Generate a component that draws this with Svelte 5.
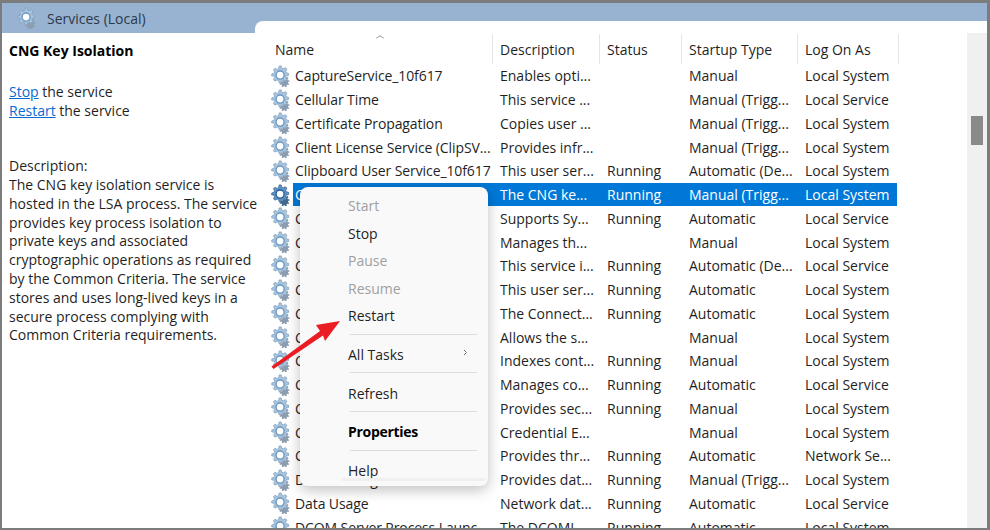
<script>
  const columns = ["Name", "Description", "Status", "Startup Type", "Log On As"];

  const rows = [
    ["CaptureService_10f617", "Enables opti...", "", "Manual", "Local System"],
    ["Cellular Time", "This service ...", "", "Manual (Trigg...", "Local Service"],
    ["Certificate Propagation", "Copies user ...", "", "Manual (Trigg...", "Local System"],
    ["Client License Service (ClipSV...", "Provides infr...", "", "Manual (Trigg...", "Local System"],
    ["Clipboard User Service_10f617", "This user ser...", "Running", "Automatic (De...", "Local System"],
    ["CNG Key Isolation", "The CNG ke...", "Running", "Manual (Trigg...", "Local System"],
    ["COM+ Event System", "Supports Sy...", "Running", "Automatic", "Local Service"],
    ["COM+ System Application", "Manages th...", "", "Manual", "Local System"],
    ["Connected Devices Platform", "This service i...", "Running", "Automatic (De...", "Local Service"],
    ["Connected Devices User", "This user ser...", "Running", "Automatic", "Local System"],
    ["Connected User Experiences", "The Connect...", "Running", "Automatic", "Local System"],
    ["ConsentUX", "Allows the s...", "", "Manual", "Local System"],
    ["Contact Data", "Indexes cont...", "Running", "Manual", "Local System"],
    ["CoreMessaging", "Manages co...", "Running", "Automatic", "Local Service"],
    ["Credential Manager", "Provides sec...", "Running", "Manual", "Local System"],
    ["Credential Enrollment", "Credential E...", "", "Manual", "Local System"],
    ["Cryptographic Services", "Provides thr...", "Running", "Automatic", "Network Se..."],
    ["Data Sharing", "Provides dat...", "Running", "Manual (Trigg...", "Local System"],
    ["Data Usage", "Network dat...", "Running", "Automatic", "Local Service"],
    ["DCOM Server Process Launc...", "The DCOMI...", "Running", "Automatic", "Local System"]
  ];

  const menu = [
    [{ label: "Start", off: true }, { label: "Stop" }, { label: "Pause", off: true }, { label: "Resume", off: true }, { label: "Restart" }],
    [{ label: "All Tasks", more: true }],
    [{ label: "Refresh" }],
    [{ label: "Properties", bold: true }],
    [{ label: "Help" }]
  ];
</script>

{#snippet gear(selected)}
  <svg class="gear" width="22" height="22" viewBox="0 0 24 24">
    <path d="M18 13.500l1.500-.3.600 1.400-1.200 1 .5 1 1.600-.1.300 1.500-1.600.6-.1 1.100 1.300.9-.7 1.300-1.500-.4-.7.8.4 1.500-1.300.6-1-1.300h-1.100l-1 1.300-1.300-.7.500-1.500-.7-.8-1.600.4-.5-1.300 1.300-1z" fill={selected ? "#44688c" : "#8d9db0"} />
    <path d="M10 1l2.200 0 .7 2.500 1.600.6 2.300-1.200 1.600 1.600-1.200 2.300.6 1.600 2.500.7v2.300l-2.500.7-.6 1.600 1.200 2.300-1.600 1.600-2.300-1.200-1.600.6-.7 2.500H10l-.7-2.500-1.600-.6-2.300 1.200-1.600-1.600 1.200-2.300-.6-1.600L1.900 12V9.800l2.500-.8.600-1.500-1.200-2.300 1.600-1.600 2.300 1.200 1.600-.7z" fill={selected ? "#5f93c6" : "#a9c5de"} stroke={selected ? "#35608c" : "#7f9fbe"} stroke-width=".8" />
    <circle cx="11" cy="11" r="4.400" fill="#fff" stroke={selected ? "#1f5f9e" : "#6a97c2"} stroke-width="1.500" />
  </svg>
{/snippet}

<div class="window">
  <header class="band">
    {@render gear(false)}
    <span>Services (Local)</span>
  </header>

  <div class="body">
    <aside class="detail">
      <h2>CNG Key Isolation</h2>
      <p class="actions">
        <span><a href="#stop">Stop</a> the service</span>
        <span><a href="#restart">Restart</a> the service</span>
      </p>
      <p class="about">
        Description:<br />
        The CNG key isolation service is hosted in the LSA process. The service provides key process isolation to private keys and associated cryptographic operations as required by the Common Criteria. The service stores and uses long-lived keys in a secure process complying with Common Criteria requirements.
      </p>
    </aside>

    <section class="list">
      <div class="table">
        <div class="row head">
          {#each columns as col, i}
            <div class="cell">{col}{#if i === 0}<span class="caret"></span>{/if}</div>
          {/each}
        </div>
        {#each rows as row, r}
          <div class="line">
            {@render gear(r === 5)}
            <div class="row" class:selected={r === 5}>
              {#each row as text}
                <div class="cell">{text}</div>
              {/each}
            </div>
          </div>
        {/each}
      </div>
      <div class="scrollbar"><div class="thumb"></div></div>
    </section>
  </div>

  <div class="menu">
    {#each menu as group, g}
      {#if g > 0}<div class="sep"></div>{/if}
      <div class="group">
        {#each group as item}
          <div class="item" class:off={item.off} class:bold={item.bold}>
            {item.label}
            {#if item.more}
              <svg class="more" width="5" height="7" viewBox="0 0 5 7"><path d="M1 1l2.500 2.500L1 6" fill="none" stroke="#777" stroke-width="1" /></svg>
            {/if}
          </div>
        {/each}
      </div>
    {/each}
  </div>

  <svg class="arrow" width="74" height="54" viewBox="0 0 74 54">
    <path d="M70 3L46 7l4 6L1.500 48.500 3.500 51 53 17.500l2 5.500z" fill="#ea1c24" />
  </svg>
</div>

<style>
  :global(body) {
    overflow: hidden;
    background: #fff;
  }

  .window {
    position: relative;
    box-sizing: border-box;
    width: 990px;
    height: 530px;
    overflow: hidden;
    border: solid #7c7c7c;
    border-width: 3px 3px 2px 2px;
    font-family: "Open Sans", "Noto Sans", sans-serif;
    font-size: 14px;
    color: #1f1f1f;
    background: #fff;
  }

  .band {
    position: relative;
    display: flex;
    align-items: center;
    gap: 8px;
    height: 30px;
    padding-left: 14px;
    color: #2b3a4a;
    background: #98b3d1;
  }

  .band::after {
    content: "";
    position: absolute;
    left: 253px;
    right: 0;
    top: 18px;
    bottom: 0;
    border-top-left-radius: 8px;
    background: #fff;
  }

  .body {
    display: flex;
    height: 495px;
  }

  .detail {
    box-sizing: border-box;
    width: 253px;
    flex: none;
    padding: 9px 0 0 7px;
    line-height: 18.780px;
    position: relative;
    z-index: 1;
  }

  h2 {
    margin: 0;
    font-size: 14px;
    font-weight: 700;
    color: #000;
  }

  .actions {
    display: flex;
    flex-direction: column;
    margin: 22px 0 0;
  }

  a {
    color: #0a6ad4;
  }

  .about {
    margin: 37px -6px 0 0;
  }

  .list {
    flex: 1;
    display: flex;
    padding-left: 15px;
  }

  .table {
    flex: 1;
    padding-top: 1px;
  }

  .row {
    display: grid;
    grid-template-columns: 199px 107px 82px 116px 100px;
  }

  .head {
    height: 30px;
    grid-template-columns: 223px 107px 82px 116px 101px;
  }

  .head .cell {
    position: relative;
    height: 30px;
    line-height: 32px;
    border-right: 1px solid #e5e5e5;
    padding-left: 7px;
  }

  .head .cell:first-child {
    padding-left: 5px;
  }

  .caret {
    position: absolute;
    left: 107px;
    top: 1px;
    width: 5px;
    height: 5px;
    border-top: 1px solid #999;
    border-left: 1px solid #999;
    transform: scaleY(.6) rotate(45deg);
  }

  .line {
    display: flex;
    align-items: center;
    height: 23.750px;
  }

  .gear {
    flex: none;
    margin-right: 1px;
  }

  .line .row {
    line-height: 23px;
    white-space: nowrap;
  }

  .line .cell {
    padding-left: 8px;
    overflow: hidden;
  }

  .line .cell:first-child {
    padding-left: 2px;
    letter-spacing: -.1px;
  }

  .selected {
    background: #0078d7;
    color: #fff;
  }

  .scrollbar {
    width: 20px;
    flex: none;
    padding-top: 83px;
    background: #f0f0f0;
    display: flex;
    justify-content: center;
    box-sizing: border-box;
    height: 100%;
  }

  .thumb {
    width: 12px;
    height: 29px;
    background: #8a8a8a;
  }

  .menu {
    position: absolute;
    left: 298px;
    top: 184px;
    box-sizing: border-box;
    width: 188px;
    height: 299px;
    padding: 5px 0;
    background: #f9f9f9;
    border-radius: 8px;
    box-shadow: 0 4px 14px rgba(0, 0, 0, .25);
  }

  .menu::after {
    content: "";
    position: absolute;
    left: 42px;
    right: 3px;
    bottom: 5px;
    height: 3px;
    background: #f0f0f0;
  }

  .item {
    position: relative;
    height: 27.500px;
    line-height: 27px;
    padding-left: 48px;
  }

  .off {
    color: #a0a0a0;
  }

  .bold {
    font-weight: 700;
    color: #000;
    letter-spacing: -.3px;
  }

  .more {
    position: absolute;
    left: 163px;
    top: 8px;
  }

  .sep {
    height: 1px;
    margin: 4px 11px 6.250px 50px;
    background: #dcdcdc;
  }

  .arrow {
    position: absolute;
    left: 268px;
    top: 315px;
  }
</style>
